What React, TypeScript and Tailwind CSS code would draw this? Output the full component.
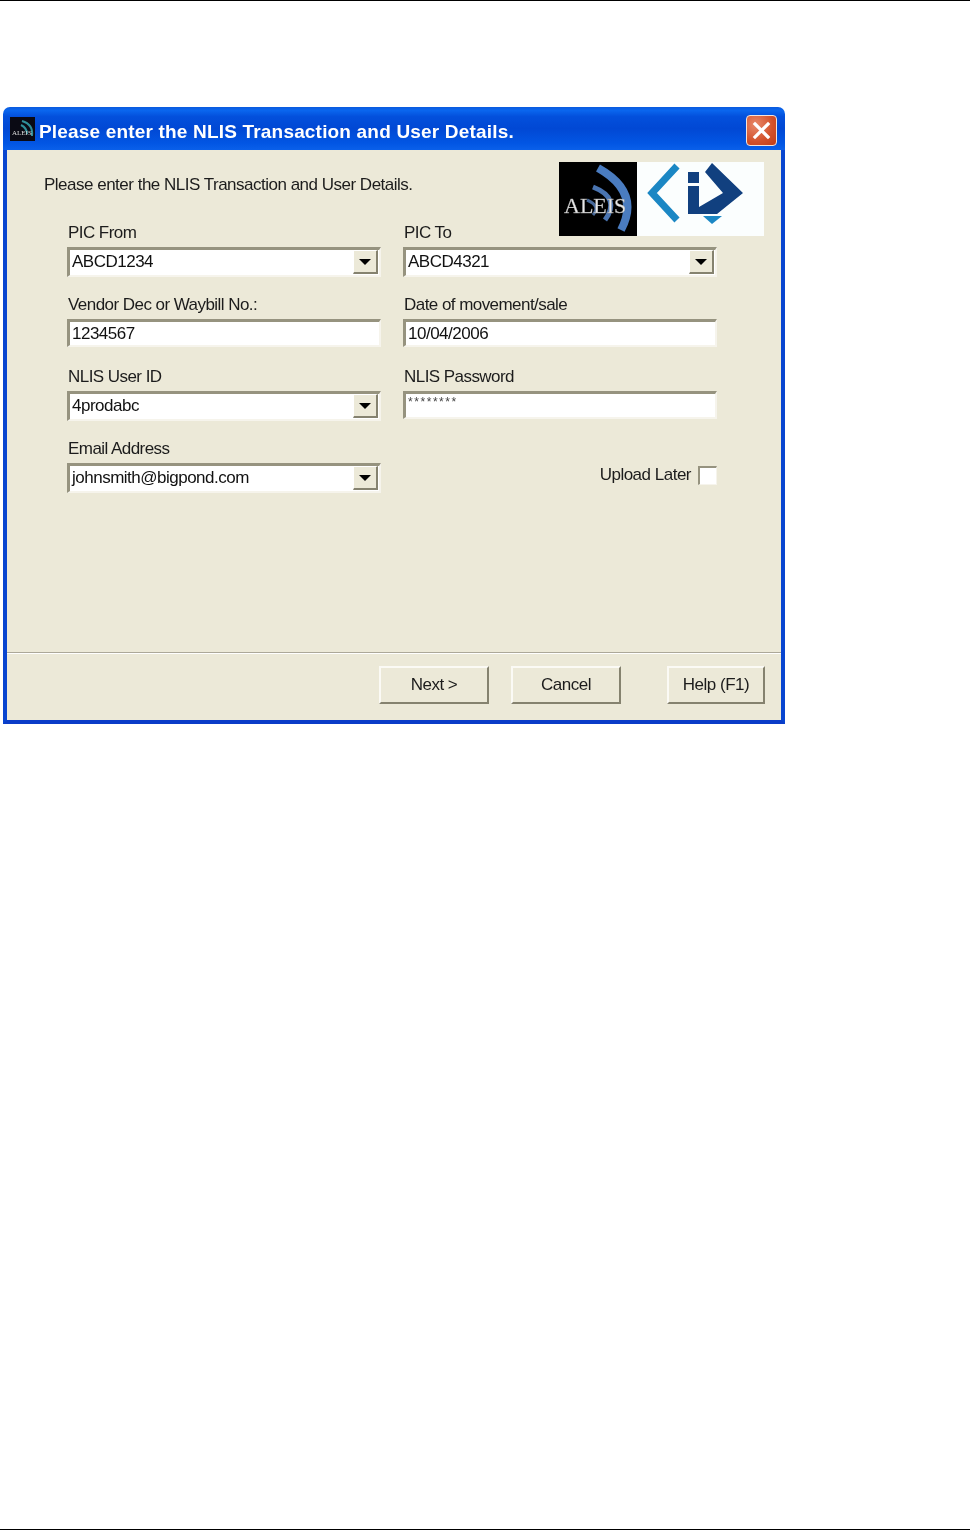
import React from "react";

const font = "[font-family:'Liberation_Sans',Arial,sans-serif]";

function Label({ children }: { children: React.ReactNode }) {
  return <div className="h-[18px] pl-px text-[17px] leading-[20px] tracking-[-0.55px] text-[#1c1c1c] whitespace-nowrap">{children}</div>;
}

function Field({ label, value, combo, small }: { label: string; value: string; combo?: boolean; small?: boolean }) {
  return (
    <div className="h-[72px]">
      <Label>{label}</Label>
      <div className={`mt-[6px] flex ${combo ? "h-[30px]" : "h-[28px]"} w-[314px] border-t-[3px] border-l-[3px] border-b-2 border-r-2 border-t-[#96937f] border-l-[#96937f] border-b-[#f6f4ec] border-r-[#f6f4ec] bg-white`}>
        <div className={small ? "flex-1 pl-[2px] text-[12px] leading-[16px] tracking-[1.55px] text-[#444]" : "flex-1 pl-[2px] text-[17px] leading-[24px] tracking-[-0.5px] text-[#111]"}>{value}</div>
        {combo && (
          <div className="mr-px flex h-[24px] w-[25px] items-center justify-center border-r-2 border-b-2 border-r-[#85826f] border-b-[#85826f] border-l border-t border-l-white border-t-white bg-[#ece9d8]">
            <div className="h-0 w-0 border-x-[6px] border-t-[6px] border-x-transparent border-t-black" />
          </div>
        )}
      </div>
    </div>
  );
}

function Btn({ children, w }: { children: React.ReactNode; w: string }) {
  return (
    <div className={`${w} flex h-[38px] items-center justify-center border-t-2 border-l-2 border-b-2 border-r-2 border-t-[#fbfaf5] border-l-[#fbfaf5] border-b-[#85826f] border-r-[#85826f] bg-[#ece9d8] text-[17px] tracking-[-0.5px] text-[#1c1c1c]`}>
      {children}
    </div>
  );
}

function Logo() {
  return (
    <div className="flex h-[74px] w-[205px] bg-[#fbfefe]">
      <svg width="78" height="74" viewBox="0 0 78 74" className="shrink-0 bg-black">
        <path d="M39 6 Q82 30 62 68" fill="none" stroke="#4a7cc0" strokeWidth="8" />
        <path d="M34 25 Q62 36 46 58" fill="none" stroke="#4a74b0" strokeWidth="5" />
        <path d="M28 38 Q42 44 34 53" fill="none" stroke="#47699a" strokeWidth="3" />
        <text x="5" y="51" fontFamily="'Liberation Serif',serif" fontSize="22" fill="#e8e8e8" stroke="#999" strokeWidth="0.3">ALEIS</text>
      </svg>
      <svg width="127" height="74" viewBox="0 0 127 74">
        <path d="M40 4 L15 31 L40 58" fill="none" stroke="#1b87c4" strokeWidth="7" />
        <rect x="51" y="10" width="11" height="11" fill="#11407f" />
        <rect x="51" y="24" width="11" height="28" fill="#11407f" />
        <path d="M75 1 L106 31 L80 52 L62 52 L62 45 L86 31 L68 10 Z" fill="#11407f" />
        <path d="M66 54 L85 54 L75 62 Z" fill="#1b87c4" />
      </svg>
    </div>
  );
}

export default function App() {
  return (
    <div className={`${font} relative h-[1531px] w-[970px] overflow-hidden bg-white`}>
      <div className="h-px bg-black" />
      <div className="ml-[3px] mt-[106px] w-[782px] [filter:blur(0.35px)]">
        <div className="flex h-[43px] justify-between rounded-t-[7px] bg-[linear-gradient(180deg,#0a5ade_0%,#0a66ee_8%,#0350dc_22%,#0148d4_50%,#0256e4_85%,#0a60ea_100%)] pl-[7px] pr-[8px]">
          <div className="flex items-center gap-[4px]">
            <svg width="25" height="24" viewBox="0 0 25 24" className="bg-[#0a0a14]">
              <path d="M12 4 C19 6 23 11 22 19" fill="none" stroke="#2f8f9a" strokeWidth="2" />
              <path d="M11 8 C15 10 17 13 17 17" fill="none" stroke="#2f8f9a" strokeWidth="2" />
              <text x="2" y="18" fontFamily="'Liberation Serif',serif" fontSize="7" fill="#ddd">ALEIS</text>
            </svg>
            <span className="pt-[5px] text-[19px] font-bold leading-none tracking-[0.18px] text-white whitespace-nowrap">Please enter the NLIS Transaction and User Details.</span>
          </div>
          <div className="mt-[8px] flex h-[31px] w-[31px] items-center justify-center rounded-[4px] border border-[#f4e4dc] bg-[radial-gradient(circle_at_30%_30%,#e8896a,#d2502a_60%,#c03c18)]">
            <svg width="19" height="19" viewBox="0 0 19 19">
              <path d="M3 3 L16 16 M16 3 L3 16" stroke="#fff" strokeWidth="3.2" strokeLinecap="square" />
            </svg>
          </div>
        </div>
        <div className="border-x-4 border-b-4 border-x-[#0845d0] border-b-[#0a3cc8] bg-[#ece9d8]">
          <div className="flex h-[502px] flex-col pt-[12px]">
            <div className="flex items-start justify-between pl-[37px] pr-[17px]">
              <div className="pt-[13px] text-[17px] leading-[20px] tracking-[-0.5px] text-[#1c1c1c]">Please enter the NLIS Transaction and User Details.</div>
              <Logo />
            </div>
            <div className="-mt-[13px] grid grid-cols-[314px_314px] gap-x-[22px] pl-[60px]">
              <Field label="PIC From" value="ABCD1234" combo />
              <Field label="PIC To" value="ABCD4321" combo />
              <Field label="Vendor Dec or Waybill No.:" value="1234567" />
              <Field label="Date of movement/sale" value="10/04/2006" />
              <Field label="NLIS User ID" value="4prodabc" combo />
              <Field label="NLIS Password" value="********" small />
              <Field label="Email Address" value="johnsmith@bigpond.com" combo />
              <div className="flex h-[54px] items-start justify-end gap-[7px] pt-[27px]">
                <span className="text-[17px] leading-[18px] tracking-[-0.5px] text-[#1c1c1c]">Upload Later</span>
                <div className="h-[19px] w-[19px] border-t-2 border-l-2 border-b border-r border-t-[#96937f] border-l-[#96937f] border-b-[#f6f4ec] border-r-[#f6f4ec] bg-white" />
              </div>
            </div>
          </div>
          <div className="h-[2px] border-t border-t-[#aca899] border-b border-b-white" />
          <div className="flex h-[66px] items-start pl-[372px] pt-[12px]">
            <Btn w="w-[110px]">Next &gt;</Btn>
            <div className="w-[22px]" />
            <Btn w="w-[110px]">Cancel</Btn>
            <div className="w-[46px]" />
            <Btn w="w-[98px]">Help (F1)</Btn>
          </div>
        </div>
      </div>
      <div className="absolute bottom-[1px] left-0 h-px w-full bg-black" />
    </div>
  );
}
